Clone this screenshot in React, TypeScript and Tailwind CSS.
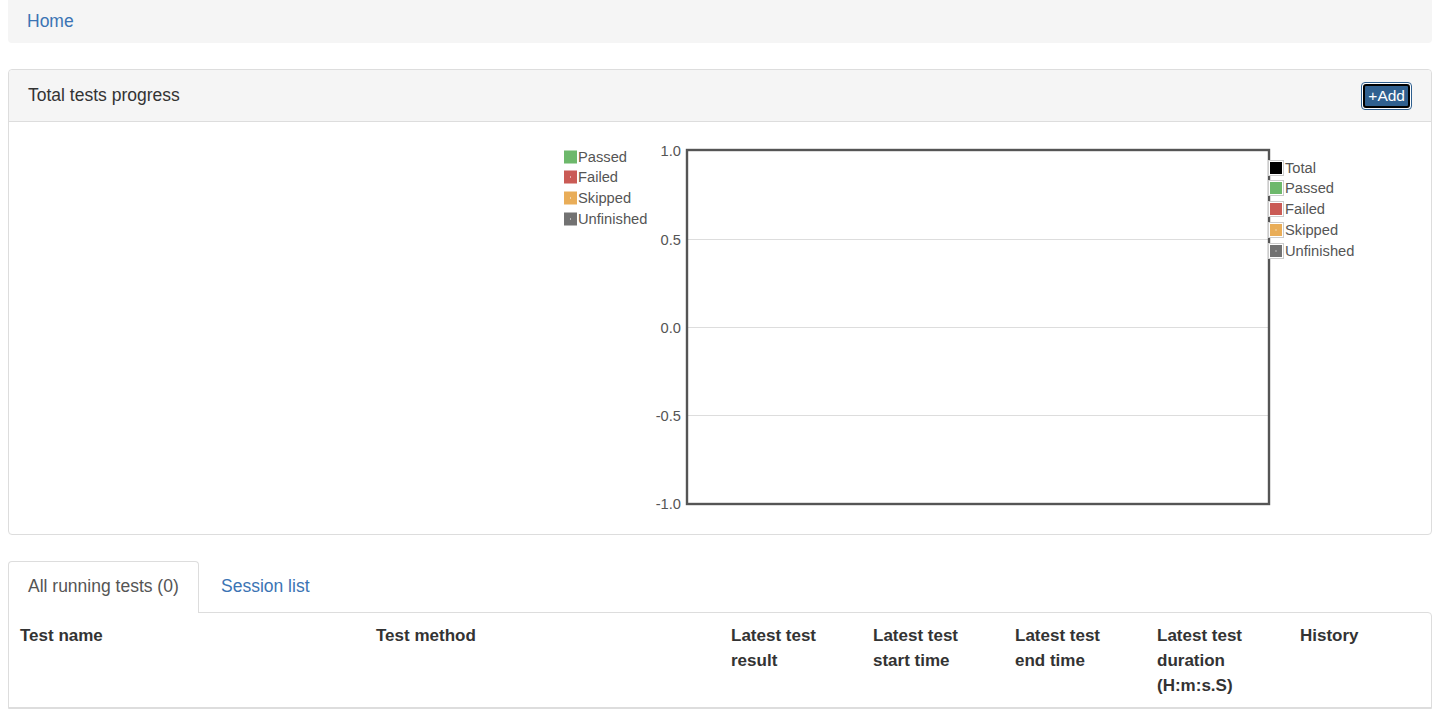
import React from 'react';

const LEFT_LEGEND = [
  { label: 'Passed', color: '#6db86b', dot: false },
  { label: 'Failed', color: '#ca5b55', dot: true },
  { label: 'Skipped', color: '#e9ad58', dot: true },
  { label: 'Unfinished', color: '#727272', dot: true },
];

const RIGHT_LEGEND = [
  { label: 'Total', color: '#000000', dot: false },
  { label: 'Passed', color: '#6db86b', dot: false },
  { label: 'Failed', color: '#ca5b55', dot: false },
  { label: 'Skipped', color: '#e9ad58', dot: true },
  { label: 'Unfinished', color: '#727272', dot: true },
];

const Y_TICKS = [
  { label: '1.0', y: 150 },
  { label: '0.5', y: 239 },
  { label: '0.0', y: 327 },
  { label: '-0.5', y: 415 },
  { label: '-1.0', y: 503 },
];

const COLUMNS = [
  { title: 'Test name', w: 'w-[356px]' },
  { title: 'Test method', w: 'w-[355px]' },
  { title: 'Latest test result', w: 'w-[142px]' },
  { title: 'Latest test start time', w: 'w-[142px]' },
  { title: 'Latest test end time', w: 'w-[142px]' },
  { title: 'Latest test duration (H:m:s.S)', w: 'w-[143px]' },
  { title: 'History', w: 'flex-1' },
];

const ProgressChart: React.FC = () => {
  const yLeft = [157, 177, 198, 219];
  const yRight = [168, 188, 209, 230, 251];
  return (
    <svg width={1422} height={411} viewBox="9 122 1422 411" className="block" style={{ fontFamily: '"Liberation Sans", Arial, sans-serif' }}>
      {/* left legend */}
      {LEFT_LEGEND.map((item, i) => (
        <g key={item.label}>
          <rect x={564} y={yLeft[i] - 6.5} width={13} height={13} fill={item.color} />
          {item.dot && <rect x={570} y={yLeft[i] - 0.5} width={1} height={1} fill="#fff" />}
          <text x={578} y={yLeft[i] + 5} fontSize={14.7} fill="#555">{item.label}</text>
        </g>
      ))}

      {/* grid */}
      {[239, 327, 415].map((y) => (
        <line key={y} x1={687} x2={1269} y1={y + 0.5} y2={y + 0.5} stroke="#dddddd" strokeWidth={1} />
      ))}
      <rect x={687} y={150} width={582} height={354} fill="none" stroke="#555" strokeWidth={2.4} />

      {Y_TICKS.map((t) => (
        <text key={t.label} x={681} y={t.y + 6} fontSize={14.7} fill="#555" textAnchor="end">{t.label}</text>
      ))}

      {/* right legend */}
      {RIGHT_LEGEND.map((item, i) => (
        <g key={item.label}>
          <rect x={1268.5} y={yRight[i] - 7.5} width={15} height={15} fill="#fff" stroke="#cccccc" strokeWidth={1} />
          <rect x={1270} y={yRight[i] - 6} width={12} height={12} fill={item.color} />
          {item.dot && <rect x={1275.5} y={yRight[i] - 0.5} width={1} height={1} fill="#fff" />}
          <text x={1285} y={yRight[i] + 5} fontSize={14.7} fill="#555">{item.label}</text>
        </g>
      ))}
    </svg>
  );
};

const App: React.FC = () => {
  return (
    <div className="min-h-[714px] bg-white text-[17.5px] leading-[25px] text-[#333]" style={{ fontFamily: '"Liberation Sans", Arial, Helvetica, sans-serif' }}>
      <div className="ml-[8px] w-[1424px]">
        {/* breadcrumb */}
        <div className="h-[43px] bg-[#f5f5f5] rounded-b-[4px] pl-[19px] flex items-center pb-[1px]">
          <a className="text-[#3b74b4]">Home</a>
        </div>

        {/* chart panel */}
        <div className="mt-[26px] border border-[#dddddd] rounded-[4px] h-[466px]">
          <div className="h-[52px] bg-[#f5f5f5] border-b border-[#dddddd] rounded-t-[4px] flex items-center justify-between pl-[19px] pr-[19px]">
            <span>Total tests progress</span>
            <span className="rounded-[4px] border border-[#2e5f8f] p-[1px] bg-white mt-[1px]">
              <span className="flex items-center h-[24px] px-[3px] rounded-[3px] border-2 border-black bg-[#30608f] text-white text-[15.5px] leading-none">
                +Add
              </span>
            </span>
          </div>
          <ProgressChart />
        </div>

        {/* tabs */}
        <div className="mt-[26px] flex items-end h-[52px]">
          <div className="h-[52px] w-[191px] border border-b-0 border-[#dddddd] rounded-t-[4px] flex items-center pl-[19px] pb-[2px] text-[#555] bg-white">
            All running tests (0)
          </div>
          <div className="h-[52px] flex items-center pl-[22px] pb-[2px] text-[#3b74b4]">Session list</div>
        </div>

        {/* table */}
        <div className="border border-[#dddddd] rounded-tr-[4px] -mt-px">
          <div className="flex border-b border-[#dddddd] h-[95px] font-bold text-[17px] text-[#333]">
            {COLUMNS.map((c) => (
              <div key={c.title} className={`${c.w} pl-[11px] pr-[20px] pt-[10px]`}>
                {c.title}
              </div>
            ))}
          </div>
        </div>
      </div>
    </div>
  );
};

export default App;
